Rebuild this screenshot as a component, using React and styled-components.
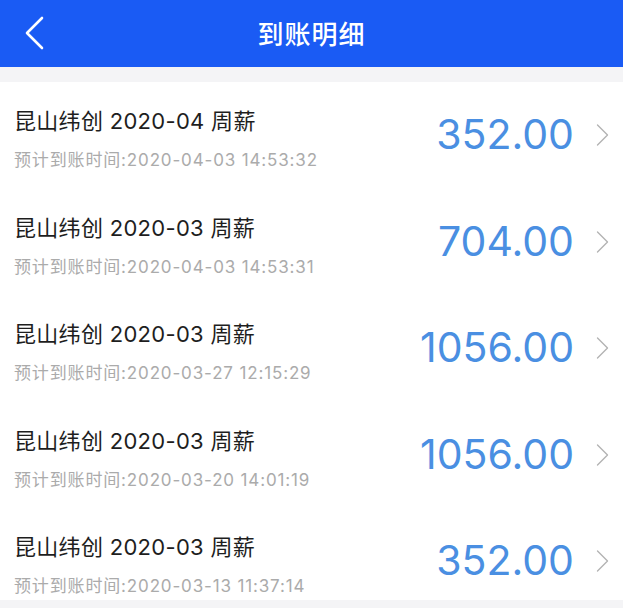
import React from "react";
import styled, { createGlobalStyle } from "styled-components";

const Global = createGlobalStyle`
  html, body { margin: 0; padding: 0; background: #f4f4f6; }
  body { font-family: Inter, "Noto Sans CJK SC", "Noto Sans", sans-serif; }
`;

const Page = styled.div`
  width: 623px;
  height: 608px;
  overflow: hidden;
  background: #f4f4f6;
`;

const Header = styled.header`
  height: 67px;
  background: #1a5bf4;
  display: flex;
  align-items: center;
  justify-content: center;
  position: relative;
`;

const BackButton = styled.button`
  position: absolute;
  left: 22px;
  top: 16px;
  width: 24px;
  height: 34px;
  padding: 0;
  border: 0;
  background: none;
  display: flex;
  align-items: center;
  justify-content: center;
`;

const Title = styled.h1`
  margin: 0 0 2px 0;
  color: #fff;
  font-family: "Noto Sans CJK SC", sans-serif;
  font-size: 26px;
  font-weight: 500;
  letter-spacing: 1px;
  line-height: 34px;
`;

const List = styled.div`
  margin-top: 15px;
  background: #fff;
  display: flex;
  flex-direction: column;
  gap: 14.5px;
`;

const Row = styled.div`
  height: 92px;
  display: flex;
  align-items: flex-start;
  padding: 0 14px 0 14px;
  box-sizing: border-box;
`;

const TextCol = styled.div`
  flex: 1;
  padding-top: 24px;
  display: flex;
  flex-direction: column;
`;

const ItemTitle = styled.div`
  font-family: Inter, "Noto Sans CJK SC", sans-serif;
  font-size: 22px;
  line-height: 30px;
  letter-spacing: 0.3px;
  color: #1e1e1e;
  white-space: nowrap;
`;

const ItemSub = styled.div`
  margin-top: 13px;
  font-family: Inter, "Noto Sans CJK SC", sans-serif;
  font-size: 17px;
  line-height: 22px;
  letter-spacing: 0.85px;
  color: #ababab;
  white-space: nowrap;
`;

const Amount = styled.div`
  margin-top: 27px;
  font-family: Inter, "Liberation Sans", sans-serif;
  font-size: 41px;
  line-height: 50px;
  color: #4a8fe2;
  white-space: nowrap;
`;

const Chevron = styled.svg`
  margin-top: 42px;
  margin-left: 22px;
  width: 13px;
  height: 22px;
  flex-shrink: 0;
`;

const items = [
  { title: "昆山纬创 2020-04 周薪", time: "2020-04-03 14:53:32", amount: "352.00" },
  { title: "昆山纬创 2020-03 周薪", time: "2020-04-03 14:53:31", amount: "704.00" },
  { title: "昆山纬创 2020-03 周薪", time: "2020-03-27 12:15:29", amount: "1056.00" },
  { title: "昆山纬创 2020-03 周薪", time: "2020-03-20 14:01:19", amount: "1056.00" },
  { title: "昆山纬创 2020-03 周薪", time: "2020-03-13 11:37:14", amount: "352.00" },
];

export default function App() {
  return (
    <Page>
      <Global />
      <Header>
        <BackButton aria-label="返回">
          <svg width="22" height="34" viewBox="0 0 22 34">
            <path d="M19 2 L4 17 L19 32" fill="none" stroke="#fff" strokeWidth="2.6" strokeLinecap="round" strokeLinejoin="round" />
          </svg>
        </BackButton>
        <Title>到账明细</Title>
      </Header>
      <List>
        {items.map((it, i) => (
          <Row key={i}>
            <TextCol>
              <ItemTitle>{it.title}</ItemTitle>
              <ItemSub>预计到账时间:{it.time}</ItemSub>
            </TextCol>
            <Amount>{it.amount}</Amount>
            <Chevron viewBox="0 0 13 22">
              <path d="M1.5 1 L11.5 11 L1.5 21" fill="none" stroke="#b3b3b3" strokeWidth="1.4" strokeLinecap="round" strokeLinejoin="round" />
            </Chevron>
          </Row>
        ))}
      </List>
    </Page>
  );
}
